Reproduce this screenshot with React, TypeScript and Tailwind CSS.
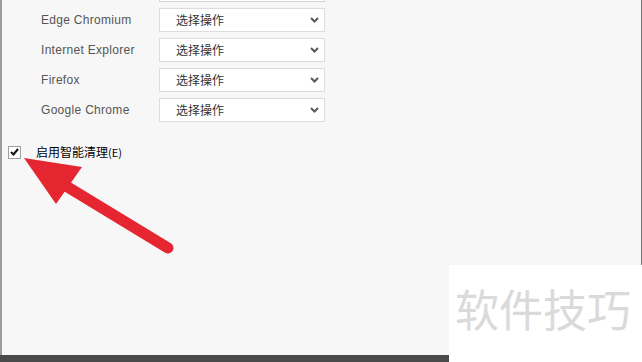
import React from 'react'

const browsers = ['Edge Chromium', 'Internet Explorer', 'Firefox', 'Google Chrome']

function Chevron() {
  return (
    <svg width="9" height="6" viewBox="0 0 9 6" className="shrink-0">
      <path d="M1 1l3.5 3.5L8 1" fill="none" stroke="#5a5a5a" strokeWidth="2" />
    </svg>
  )
}

function SelectBox() {
  return (
    <div className="flex h-[24px] w-[166px] shrink-0 items-center justify-between border border-[#dcdcdc] bg-white pl-[16px] pr-[5px]">
      <span className="text-[12px] text-[#333] [font-family:'Noto_Sans_CJK_SC',sans-serif] leading-none">选择操作</span>
      <Chevron />
    </div>
  )
}

export default function App() {
  return (
    <div className="relative h-[362px] w-[642px] overflow-hidden bg-white [font-family:'Liberation_Sans','Noto_Sans_CJK_SC',sans-serif]">
      {/* main panel */}
      <div className="flex h-[355px] w-[642px] flex-col border-l-2 border-r border-l-[#9a9a9a] border-r-[#7a7a7a] bg-[#f7f7f7]">
        {/* bottom of the select above, cut off */}
        <div className="ml-[157px] h-[2px] w-[166px] border-b border-x border-[#d4d4d4] bg-white" />

        <div className="mt-[6px] flex flex-col gap-[6px]">
          {browsers.map((b) => (
            <div key={b} className="flex items-center">
              <span className="w-[157px] shrink-0 whitespace-nowrap pl-[39px] text-[12px] tracking-[0.3px] text-[#555]">{b}</span>
              <SelectBox />
            </div>
          ))}
        </div>

        <div className="mt-[21px] flex items-center pl-[6px]">
          <div className="flex h-[13px] w-[13px] items-center justify-center border border-[#a0a0a0] bg-white">
            <svg width="9" height="8" viewBox="0 0 9 8">
              <path d="M1 4l2.5 2.5L8 1" fill="none" stroke="#111" strokeWidth="2" />
            </svg>
          </div>
          <span className="ml-[15px] whitespace-nowrap text-[12px] text-black [font-family:'Noto_Sans_CJK_SC',sans-serif]">
            启用智能清理<span className="text-[11px]">(E)</span>
          </span>
        </div>
      </div>

      {/* bottom bar */}
      <div className="h-[7px] w-[449px] bg-[#4a4a4a]" />

      {/* watermark */}
      <div className="absolute bottom-0 left-[449px] right-0 top-[265px] bg-white">
        <div className="pl-[6px] pt-[21px] text-[44px] leading-none text-[#dadada] [font-family:'Noto_Sans_CJK_SC',sans-serif]">
          软件技巧
        </div>
      </div>

      {/* red arrow annotation */}
      <svg className="absolute left-0 top-0" width="642" height="362" viewBox="0 0 642 362">
        <line x1="66" y1="186" x2="168" y2="248" stroke="#e52630" strokeWidth="11" strokeLinecap="round" />
        <polygon points="24,158 82,167 56,204" fill="#e52630" />
      </svg>
    </div>
  )
}
